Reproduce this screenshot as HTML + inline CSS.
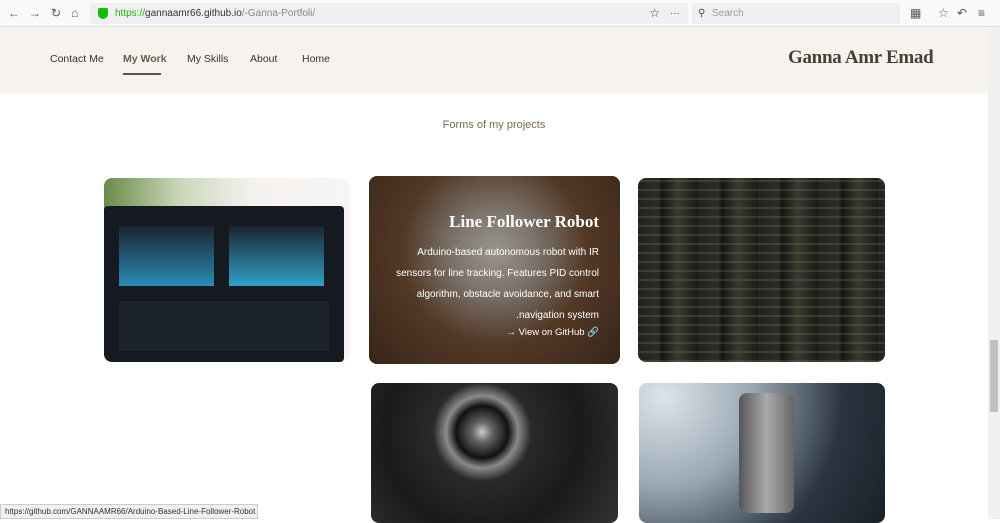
<!DOCTYPE html>
<html><head><meta charset="utf-8"><style>
*{margin:0;padding:0;box-sizing:border-box}
body{width:1000px;height:519px;overflow:hidden;background:#fff;font-family:"Liberation Sans",sans-serif;position:relative}
.tb{position:absolute;left:0;top:0;width:1000px;height:27px;background:#f9f9fa;border-bottom:1px solid #e0e0e0}
.url{position:absolute;left:90px;top:3px;width:598px;height:21px;background:#f0f0f2;border-radius:2px;font-size:10px;line-height:21px;padding-left:25px;color:#333}
.srch{position:absolute;left:692px;top:3px;width:208px;height:21px;background:#f0f0f2;border-radius:2px;font-size:10px;line-height:21px;padding-left:20px;color:#999}
.ic{position:absolute;top:6px;font-size:12px;color:#555}
.hdr{position:absolute;left:0;top:27px;width:988px;height:66px;background:#f6f3ee}
.nav{position:absolute;top:53px;font-size:10.5px;color:#333;font-family:"Liberation Sans",sans-serif}
.logo{position:absolute;left:788px;top:47px;font-family:"Liberation Serif",serif;font-weight:bold;font-size:19px;letter-spacing:-0.3px;color:#4a3f36}
h2{position:absolute;left:0;width:988px;top:119px;text-align:center;font-weight:normal;font-size:11px;color:#7a6a55;font-family:"Liberation Sans",sans-serif}
.card{position:absolute;border-radius:8px;overflow:hidden}
.sb{position:absolute;right:0;top:27px;width:12px;height:492px;background:#f0f0f0}
.status{position:absolute;left:0;top:504px;width:258px;height:15px;background:#f0f0f0;border:1px solid #ccc;font-size:8px;line-height:13px;padding-left:4px;color:#333;white-space:nowrap;overflow:hidden}
</style></head><body>
<div class="tb">
<span class="ic" style="left:8px">←</span><span class="ic" style="left:29px">→</span><span class="ic" style="left:51px">↻</span><span class="ic" style="left:71px">⌂</span>
<div class="url"><span style="position:absolute;left:8px;top:5px;width:10px;height:11px;background:#12bc00;border-radius:2px 2px 5px 5px"></span><span style="color:#12bc00">https://</span>gannaamr66.github.io<span style="color:#888">/-Ganna-Portfoli/</span>
<span style="position:absolute;right:28px;color:#444;font-size:12px">☆</span><span style="position:absolute;right:8px;color:#444">···</span></div>
<div class="srch"><span style="position:absolute;left:6px;color:#444">⚲</span>Search</div>
<span class="ic" style="left:910px">▦</span><span class="ic" style="left:938px">☆</span><span class="ic" style="left:957px">↶</span><span class="ic" style="left:978px">≡</span>
</div>
<div class="hdr"></div>
<span class="nav" style="left:50px">Contact Me</span>
<span class="nav" style="left:123px;color:#6b5a45;font-weight:bold">My Work</span>
<div style="position:absolute;left:123px;top:73px;width:38px;height:2px;background:#555"></div>
<span class="nav" style="left:187px">My Skills</span>
<span class="nav" style="left:250px">About</span>
<span class="nav" style="left:302px">Home</span>
<div class="logo">Ganna Amr Emad</div>
<h2>Forms of my projects</h2>

<div class="card" style="left:104px;top:178px;width:246px;height:184px;background:linear-gradient(90deg,#6a8a4a 0,#c9d6b8 30%,#f4f1ee 60%,#f8f6f5)">
<div style="position:absolute;left:0;top:28px;width:240px;height:156px;background:#151a20;border-radius:4px">
<div style="position:absolute;left:15px;top:20px;width:95px;height:60px;background:linear-gradient(180deg,#1a2530,#2a8ab8)"></div>
<div style="position:absolute;left:125px;top:20px;width:95px;height:60px;background:linear-gradient(180deg,#1a2530,#30a0c8)"></div>
<div style="position:absolute;left:15px;top:95px;width:210px;height:50px;background:#1c232b"></div></div></div>

<div class="card" style="left:369px;top:176px;width:251px;height:188px;background:radial-gradient(circle at 50% 40%,#d9d6d2 0,#a8a39e 25%,#6a4a32 55%,#3f2b1e 100%)">
<div style="position:absolute;inset:0;background:rgba(40,25,15,.35)"></div>
<div style="position:absolute;right:21px;top:36px;font-family:'Liberation Serif',serif;font-weight:bold;font-size:17px;color:#fff">Line Follower Robot</div>
<div style="position:absolute;right:21px;top:66px;text-align:right;font-size:10px;line-height:21px;color:#fff;white-space:nowrap;font-family:'Liberation Sans',sans-serif">Arduino-based autonomous robot with IR<br>sensors for line tracking. Features PID control<br>algorithm, obstacle avoidance, and smart<br>.navigation system</div>
<div style="position:absolute;right:21px;top:151px;font-size:9.5px;color:#fff;font-family:'Liberation Sans',sans-serif">→ View on GitHub 🔗</div></div>

<div class="card" style="left:638px;top:178px;width:247px;height:184px;background:repeating-linear-gradient(90deg,#222 0,#2e2c26 20px,#151515 24px,#3a3a30 40px,#1a1a1a 60px)">
<div style="position:absolute;inset:0;background:repeating-linear-gradient(0deg,rgba(120,140,90,.25) 0,rgba(120,140,90,.25) 2px,transparent 2px,transparent 9px)"></div></div>

<div class="card" style="left:371px;top:383px;width:247px;height:140px;background:radial-gradient(circle at 45% 35%,#ccc 0,#666 6%,#111 16%,#8a8a8a 22%,#2a2a2a 30%,#1a1a1a 60%,#333 100%)"></div>
<div class="card" style="left:639px;top:383px;width:246px;height:140px;background:radial-gradient(circle at 10% 10%,#dde4ea 0,#9aa8b4 35%,#2a3540 70%,#1a2028 100%)">
<div style="position:absolute;left:100px;top:10px;width:55px;height:120px;background:linear-gradient(90deg,#555,#aaa,#666);border-radius:8px"></div></div>

<div class="sb"><div style="position:absolute;left:2px;top:313px;width:8px;height:72px;background:#c1c1c1"></div></div>
<div class="status">https://github.com/GANNAAMR66/Arduino-Based-Line-Follower-Robot</div>
</body></html>
